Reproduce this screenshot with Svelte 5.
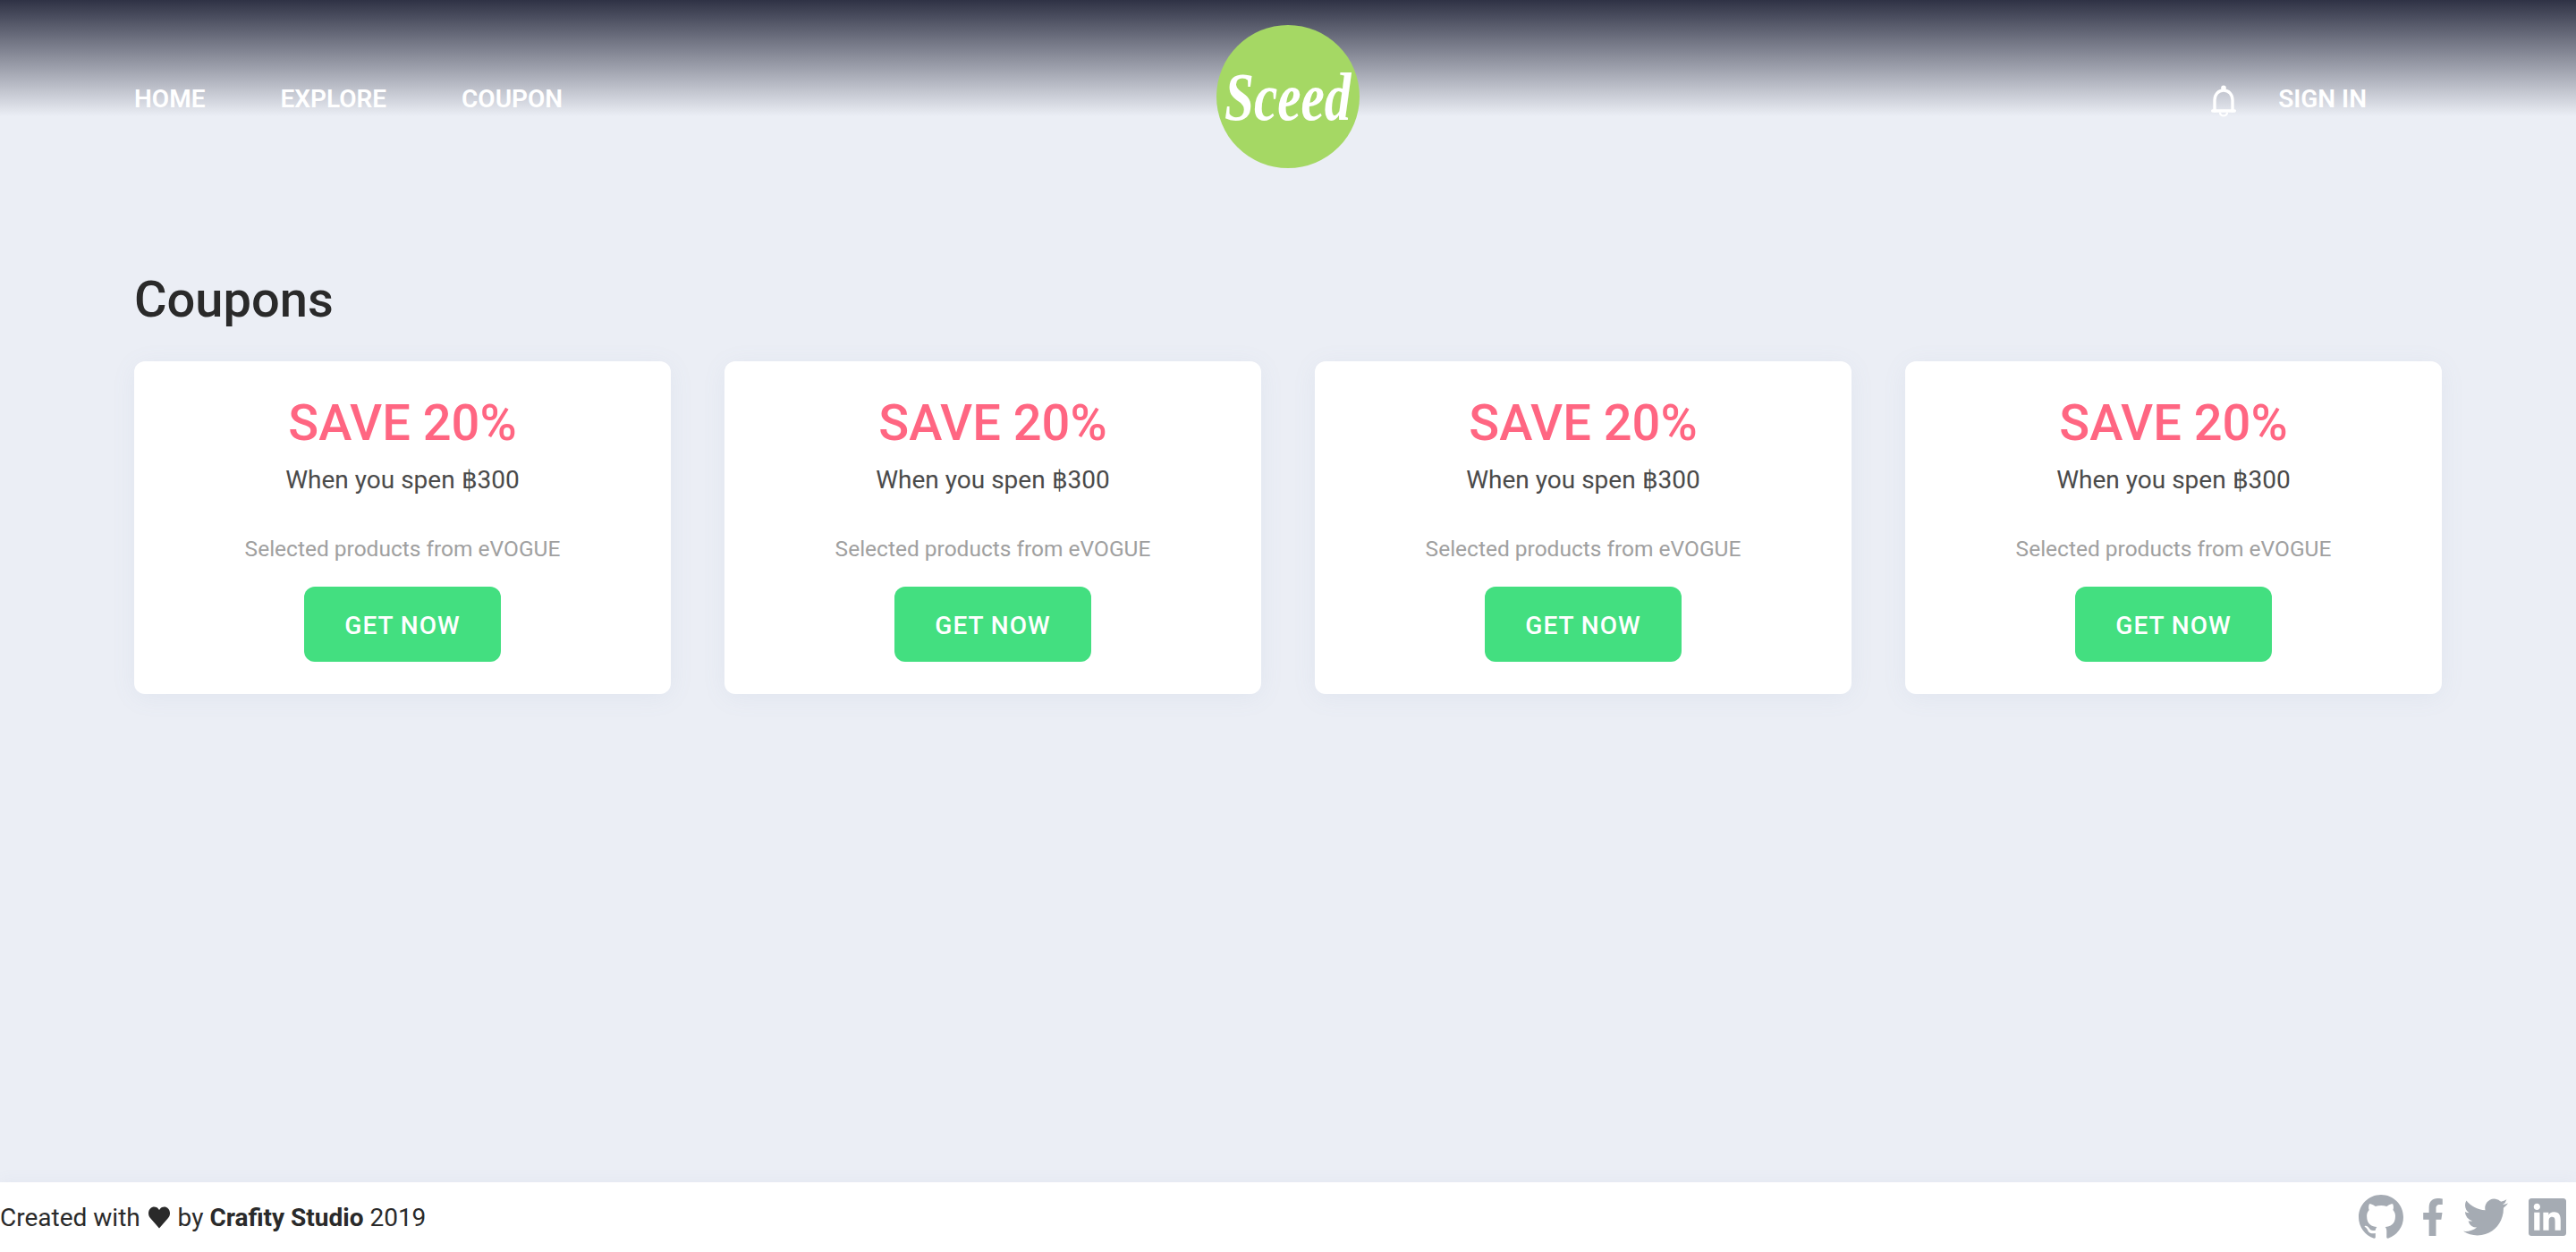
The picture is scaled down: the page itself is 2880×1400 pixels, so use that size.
<script>
	const navLinks = ['HOME', 'EXPLORE', 'COUPON'];
	const coupons = [1, 2, 3, 4];
</script>

<div class="page">
	<header class="header">
		<nav class="nav">
			{#each navLinks as link}
				<a class="nav-link" href="#top">{link}</a>
			{/each}
		</nav>

		<div class="logo"><span class="logo-text">Sceed</span></div>

		<div class="actions">
			<svg class="bell" viewBox="0 0 28 36" fill="none" stroke="currentColor" stroke-width="3.400" stroke-linecap="round" stroke-linejoin="round">
				<path d="M4 29V17C4 10.500 8.200 6 14 6s10 4.500 10 11v12" />
				<path d="M1.700 29h24.600" />
				<path d="M10 31.500c.5 2 2.200 3 4 3s3.500-1 4-3" stroke-width="2.200" />
				<circle cx="14" cy="3.200" r="2.800" fill="currentColor" stroke="none" />
			</svg>
			<a class="nav-link" href="#top">SIGN IN</a>
		</div>
	</header>

	<main class="main">
		<h1 class="title">Coupons</h1>
		<div class="grid">
			{#each coupons as coupon (coupon)}
				<div class="card">
					<div class="save">SAVE 20%</div>
					<div class="when">When you spen ฿300</div>
					<div class="selected">Selected products from eVOGUE</div>
					<button class="get">GET NOW</button>
				</div>
			{/each}
		</div>
	</main>

	<footer class="footer">
		<div class="credit">
			Created with
			<svg class="heart" viewBox="0 0 24 24"><path d="M12 24 2.200 12.800C-.7 9.500-.7 4.800 2 2c2.600-2.700 6.800-2.500 9.200.4l.8 1 .8-1c2.400-2.900 6.600-3.100 9.200-.4 2.700 2.800 2.700 7.500-.2 10.800z" /></svg>
			by <strong>Crafity Studio</strong> 2019
		</div>
		<div class="social">
			<svg class="github" viewBox="0 0 16 16"><path d="M8 0C3.580 0 0 3.580 0 8c0 3.540 2.290 6.530 5.470 7.590.4.070.55-.17.55-.38 0-.19-.01-.82-.01-1.490-2.010.37-2.530-.49-2.690-.94-.09-.23-.48-.94-.82-1.130-.28-.15-.68-.52-.01-.53.63-.01 1.080.58 1.230.82.72 1.210 1.870.87 2.330.66.07-.52.28-.87.51-1.070-1.780-.2-3.640-.89-3.640-3.950 0-.87.31-1.590.82-2.150-.08-.2-.36-1.020.08-2.120 0 0 .67-.21 2.200.82.64-.18 1.320-.27 2-.27.68 0 1.360.09 2 .27 1.530-1.040 2.200-.82 2.200-.82.44 1.100.16 1.920.08 2.120.51.56.82 1.270.82 2.150 0 3.070-1.870 3.750-3.650 3.950.29.25.54.73.54 1.480 0 1.070-.01 1.930-.01 2.200 0 .21.15.46.55.38A8.013 8.013 0 0016 8c0-4.420-3.580-8-8-8z" /></svg>
			<svg class="facebook" viewBox="20 0 280 512" preserveAspectRatio="none"><path d="M279.140 288l14.220-92.660h-88.910v-60.130c0-25.350 12.420-50.060 52.240-50.060h40.420V6.260S260.430 0 225.360 0c-73.220 0-121.080 44.380-121.080 124.720v70.620H22.890V288h81.390v224h100.170V288z" /></svg>
			<svg class="twitter" viewBox="0 2 24 20" preserveAspectRatio="none"><path d="M23.953 4.570a10 10 0 01-2.825.775 4.958 4.958 0 002.163-2.723c-.951.555-2.005.959-3.127 1.184a4.920 4.920 0 00-8.384 4.482C7.690 8.095 4.067 6.130 1.640 3.162a4.822 4.822 0 00-.666 2.475c0 1.710.87 3.213 2.188 4.096a4.904 4.904 0 01-2.228-.616v.06a4.923 4.923 0 003.946 4.827 4.996 4.996 0 01-2.212.085 4.936 4.936 0 004.604 3.417 9.867 9.867 0 01-6.102 2.105c-.39 0-.779-.023-1.170-.067a13.995 13.995 0 007.557 2.209c9.053 0 13.998-7.496 13.998-13.985 0-.21 0-.42-.015-.63A9.935 9.935 0 0024 4.590z" /></svg>
			<svg class="linkedin" viewBox="0 0 24 24"><path d="M20.447 20.452h-3.554v-5.569c0-1.328-.027-3.037-1.852-3.037-1.853 0-2.136 1.445-2.136 2.939v5.667H9.351V9h3.414v1.561h.046c.477-.9 1.637-1.850 3.370-1.850 3.601 0 4.267 2.370 4.267 5.455v6.286zM5.337 7.433c-1.144 0-2.063-.926-2.063-2.065 0-1.138.92-2.063 2.063-2.063 1.140 0 2.064.925 2.064 2.063 0 1.139-.925 2.065-2.064 2.065zm1.782 13.019H3.555V9h3.564v11.452zM22.225 0H1.771C.792 0 0 .774 0 1.729v20.542C0 23.227.792 24 1.771 24h20.451C23.200 24 24 23.227 24 22.271V1.729C24 .774 23.200 0 22.222 0h.003z" /></svg>
		</div>
	</footer>
</div>

<style>
	:global(body) {
		margin: 0;
		background: #ebeef5;
		font-family: Roboto, 'Liberation Sans', sans-serif;
	}

	.page {
		min-height: 100vh;
		display: flex;
		flex-direction: column;
	}

	.header {
		position: relative;
		height: 216px;
		box-sizing: border-box;
		padding: 0 234px 0 150px;
		display: flex;
		justify-content: space-between;
		background: linear-gradient(to bottom, #2f3245 0, #ebeef5 130px);
	}

	.nav,
	.actions {
		display: flex;
		align-items: flex-start;
		padding-top: 94px;
	}

	.nav {
		gap: 84px;
	}

	.actions {
		gap: 47px;
	}

	.nav-link {
		font-size: 28px;
		line-height: 33px;
		font-weight: 600;
		color: #fff;
		text-decoration: none;
	}

	.bell {
		width: 28px;
		height: 36px;
		margin-top: 1px;
		color: #fff;
	}

	.logo {
		position: absolute;
		left: 1360px;
		top: 28px;
		width: 160px;
		height: 160px;
		border-radius: 50%;
		background: #a5d864;
		color: #fff;
		display: flex;
		align-items: center;
		justify-content: center;
		font-family: 'Liberation Serif', serif;
		font-style: italic;
		font-weight: 700;
		font-size: 76px;
	}

	.logo-text {
		transform: scaleX(0.78);
	}

	.main {
		flex: 1;
		padding: 0 150px;
	}

	.title {
		margin: 86px 0 0;
		font-size: 56px;
		line-height: 66px;
		font-weight: 500;
		color: #2a2a2a;
	}

	.grid {
		margin-top: 36px;
		display: grid;
		grid-template-columns: repeat(4, 600px);
		gap: 60px;
	}

	.card {
		height: 372px;
		box-sizing: border-box;
		padding-top: 36px;
		background: #fff;
		border-radius: 12px;
		box-shadow: 0 4px 28px rgba(120, 135, 180, 0.08);
		display: flex;
		flex-direction: column;
		align-items: center;
	}

	.save {
		font-size: 56px;
		line-height: 67px;
		font-weight: 500;
		color: #ff6682;
	}

	.when {
		margin-top: 12px;
		font-size: 28px;
		line-height: 36px;
		color: #4a4a4a;
	}

	.selected {
		margin-top: 43px;
		font-size: 24.500px;
		line-height: 31px;
		color: #a0a0a0;
	}

	.get {
		margin-top: 27px;
		width: 220px;
		height: 84px;
		padding-top: 4px;
		border: none;
		border-radius: 12px;
		background: #43df80;
		color: #fff;
		font-family: inherit;
		font-size: 28px;
		font-weight: 500;
		letter-spacing: 1px;
	}

	.footer {
		height: 78px;
		background: #fff;
		box-shadow: 0 -2px 16px rgba(120, 135, 180, 0.06);
		display: flex;
		align-items: center;
		justify-content: space-between;
		padding-right: 11px;
	}

	.credit {
		font-size: 28px;
		color: #2a2a2a;
		padding-top: 1px;
	}

	.heart {
		width: 24px;
		height: 25px;
		margin: 0 2px;
		fill: #2a2a2a;
		vertical-align: -3px;
	}

	.social {
		display: flex;
		align-items: center;
		fill: #a5abb3;
	}

	.github {
		width: 50px;
		height: 50px;
		margin-right: 22px;
	}

	.facebook {
		width: 22px;
		height: 42px;
		margin-right: 23px;
	}

	.twitter {
		width: 50px;
		height: 42px;
		margin-right: 23px;
	}

	.linkedin {
		width: 42px;
		height: 42px;
	}
</style>
